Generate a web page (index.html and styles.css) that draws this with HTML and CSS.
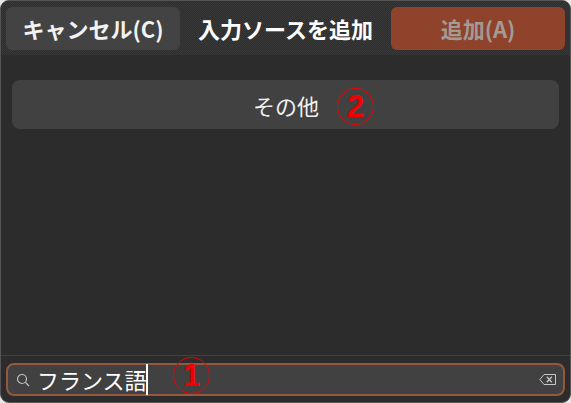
FILE: index.html
```html
<!DOCTYPE html>
<html lang="ja">
<head>
    <meta charset="UTF-8">
    <meta name="viewport" content="width=device-width, initial-scale=1.0">
    <title>入力ソースを追加</title>
    <link rel="stylesheet" href="styles.css">
</head>
<body>
    <div class="window">
        <header class="header">
            <button class="btn">キャンセル(C)</button>
            <h1 class="title">入力ソースを追加</h1>
            <button class="btn btn-add">追加(A)</button>
        </header>
        <main class="content">
            <div class="row">
                <span>その他</span>
                <span class="mark mark-row">2</span>
            </div>
        </main>
        <footer class="footer">
            <div class="search">
                <svg class="search-icon" width="14" height="14" viewBox="0 0 14 14" fill="none" stroke="#c0c0c0" stroke-width="1.2">
                    <circle cx="6" cy="6" r="4.5"/>
                    <path d="M9.4 9.4L13 13"/>
                </svg>
                <span class="search-text">フランス語</span>
                <span class="caret"></span>
                <span class="mark mark-search">1</span>
                <svg class="clear-icon" width="17" height="11" viewBox="0 0 17 11" fill="none" stroke="#c8c8c8" stroke-width="1">
                    <path d="M5 .5H16.5V10.5H5L.8 5.5Z"/>
                    <path d="M7.8 2.8L12.8 8.2M12.8 2.8L7.8 8.2" stroke-width="1.3"/>
                </svg>
            </div>
        </footer>
    </div>
</body>
</html>
```

FILE: styles.css
```css
* {
    box-sizing: border-box;
}
html, body {
    margin: 0;
    padding: 0;
    background-color: #e8e8e8;
}
body {
    font-family: "Noto Sans CJK JP", "Noto Sans", sans-serif;
    color: #fff;
}
.window {
    width: 571px;
    height: 403px;
    display: flex;
    flex-direction: column;
    background-color: #2c2c2c;
    border: 1px solid #555;
    border-radius: 9px;
    overflow: hidden;
}
.header {
    height: 54px;
    padding: 6px 5px 4px;
    display: flex;
    align-items: flex-start;
    justify-content: space-between;
    background: repeating-conic-gradient(#2e2e2e 0 25%, #383838 0 50%) 0 0 / 2px 2px;
}
.btn {
    width: 174px;
    height: 43px;
    padding: 0 0 2px;
    border: none;
    border-radius: 6px;
    background-color: #434343;
    color: #f2f2f2;
    font-family: inherit;
    font-size: 22px;
    font-weight: 700;
}
.btn-add {
    background-color: #8e432a;
    color: #a39a95;
}
.title {
    margin: 0;
    height: 43px;
    line-height: 43px;
    font-size: 22px;
    font-weight: 700;
}
.content {
    flex: 1;
    padding: 25px 11px 0;
}
.row {
    position: relative;
    height: 49px;
    display: flex;
    align-items: center;
    justify-content: center;
    border-radius: 8px;
    background-color: #414141;
    font-size: 22px;
    color: #f0f0f0;
}
.row > span:first-child {
    margin-left: 1px;
}
.mark {
    position: absolute;
    width: 37px;
    height: 37px;
    display: flex;
    align-items: center;
    justify-content: center;
    border: 1.3px solid #f00000;
    border-radius: 50%;
    color: #f00000;
    font-family: "Liberation Sans", sans-serif;
    font-size: 31px;
    font-weight: 700;
}
.mark-row {
    left: 325px;
    top: 8px;
}
.mark-search {
    left: 165px;
    top: -8px;
}
.footer {
    height: 47px;
    padding: 7px 5px 0;
    border-top: 1px solid #414141;
}
.search {
    position: relative;
    height: 33px;
    padding: 0 7px 0 8px;
    display: flex;
    align-items: center;
    border: 2px solid #96573f;
    border-radius: 8px;
    background-color: #414141;
}
.search-icon {
    margin-right: 7px;
}
.search-text {
    font-size: 22px;
    line-height: 29px;
}
.caret {
    width: 2px;
    height: 31px;
    margin-left: -1px;
    background-color: #fff;
}
.clear-icon {
    margin-left: auto;
}
```
